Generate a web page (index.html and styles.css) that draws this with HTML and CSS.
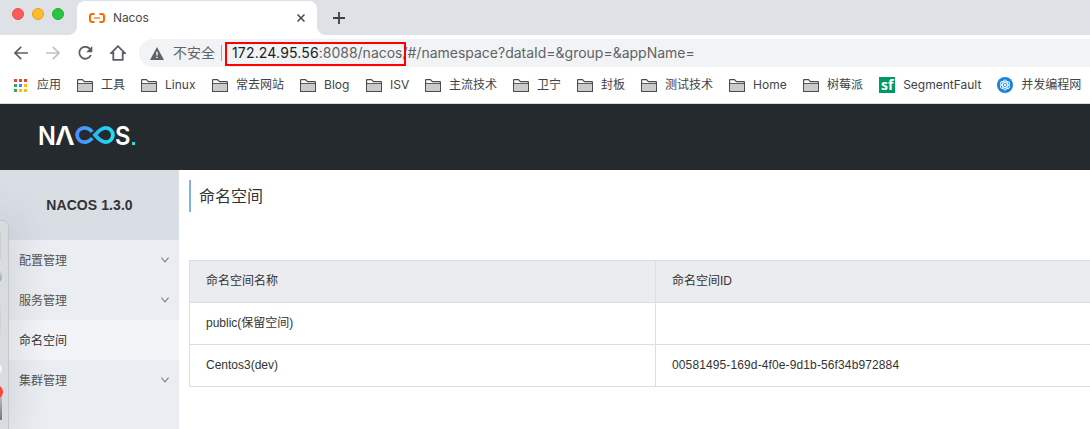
FILE: index.html
```html
<!DOCTYPE html>
<html lang="zh-CN">
<head>
<meta charset="utf-8">
<title>Nacos</title>
<link rel="stylesheet" href="styles.css">
</head>
<body>
<svg class="defs" width="0" height="0" aria-hidden="true">
  <symbol id="folder" viewBox="0 0 16 13"><path d="M.6 12.4V1.1Q.6.6 1.1.6H5.5L7.4 2.6H14.9Q15.4 2.6 15.4 3.1V12.4Z" fill="#fff" stroke="#4b4b4d" stroke-width="1.2"/><path d="M1.2 5.3H14.8V11.8H1.2Z" fill="#cbcbcb"/><path d="M1 4.6H15" stroke="#4b4b4d"/></symbol>
  <symbol id="chevron" viewBox="0 0 8 6"><path d="M.4.7 4 4.9 7.6.7" fill="none" stroke="#7d8288" stroke-width="1.1"/></symbol>
</svg>
<header class="tabs">
  <div class="lights"><i class="light red"></i><i class="light yellow"></i><i class="light green"></i></div>
  <div class="tab">
    <svg class="favicon" width="16" height="10" viewBox="0 0 16 10"><path d="M5.5 1H3.2Q1 1 1 3.2V6.8Q1 9 3.2 9H5.5M10.5 1H12.8Q15 1 15 3.2V6.8Q15 9 12.8 9H10.5" fill="none" stroke="#ff6a00" stroke-width="2"/><path d="M5 5H11" stroke="#ff7d20" stroke-width="1.4"/></svg>
    <span class="tab-name">Nacos</span>
    <svg width="8" height="8" viewBox="0 0 8 8"><path d="M.5.5 7.5 7.5M7.5.5.5 7.5" stroke="#45494d" stroke-width="1.5"/></svg>
  </div>
  <svg class="new-tab" width="12" height="12" viewBox="0 0 12 12"><path d="M6 0V12M0 6H12" stroke="#3c4043" stroke-width="1.8"/></svg>
</header>
<nav class="toolbar">
  <svg class="nav-icon" width="14" height="14" viewBox="0 0 14 14"><path d="M7.2.8 1 7 7.2 13.2M1 7H14" fill="none" stroke="#5b5f64" stroke-width="1.7"/></svg>
  <svg class="nav-icon" width="14" height="14" viewBox="0 0 14 14"><path d="M6.8.8 13 7 6.8 13.2M13 7H0" fill="none" stroke="#bfc1c4" stroke-width="1.7"/></svg>
  <svg class="nav-icon" width="15" height="14" viewBox="0 0 15 14"><path d="M12.4 3.5A6 6 0 1 0 12.9 9" fill="none" stroke="#5b5f64" stroke-width="1.8"/><path d="M14.3 0V6.2H8.1Z" fill="#5b5f64"/></svg>
  <svg class="nav-icon" width="16" height="16" viewBox="0 0 16 16"><path d="M8 1.2 1.2 8H3.3V14.9H12.7V8H14.8Z" fill="none" stroke="#5b5f64" stroke-width="1.8"/></svg>
  <div class="address">
    <svg width="14" height="13" viewBox="0 0 14 13"><path d="M7 0 14 13H0Z" fill="#5f6368"/><path d="M7 4.8V8.4M7 9.7V11.1" stroke="#fff" stroke-width="1.4"/></svg>
    <span class="insecure">不安全</span>
    <i class="divider"></i>
    <span class="url"><b>172.24.95.56</b>:8088/nacos/#/namespace?dataId=&amp;group=&amp;appName=</span>
    <i class="highlight"></i>
  </div>
</nav>
<nav class="bookmarks">
  <a class="mark"><span class="apps"><i class="r"></i><i class="r"></i><i class="r"></i><i class="g"></i><i class="b"></i><i class="y"></i><i class="g"></i><i class="y"></i><i class="y"></i></span><span>应用</span></a>
  <a class="mark"><svg><use href="#folder"/></svg><span>工具</span></a>
  <a class="mark"><svg><use href="#folder"/></svg><span class="w31">Linux</span></a>
  <a class="mark"><svg><use href="#folder"/></svg><span>常去网站</span></a>
  <a class="mark"><svg><use href="#folder"/></svg><span class="w26">Blog</span></a>
  <a class="mark"><svg><use href="#folder"/></svg><span class="w19">ISV</span></a>
  <a class="mark"><svg><use href="#folder"/></svg><span>主流技术</span></a>
  <a class="mark"><svg><use href="#folder"/></svg><span>卫宁</span></a>
  <a class="mark"><svg><use href="#folder"/></svg><span>封板</span></a>
  <a class="mark"><svg><use href="#folder"/></svg><span>测试技术</span></a>
  <a class="mark"><svg><use href="#folder"/></svg><span class="w34">Home</span></a>
  <a class="mark"><svg><use href="#folder"/></svg><span>树莓派</span></a>
  <a class="mark"><span class="sf">sf</span><span class="w78">SegmentFault</span></a>
  <a class="mark"><svg class="atom" viewBox="0 0 16 16"><circle cx="8" cy="8" r="8" fill="#1684df"/><g fill="none" stroke="#fff" stroke-width=".9"><ellipse cx="8" cy="8" rx="2.4" ry="5"/><ellipse cx="8" cy="8" rx="2.4" ry="5" transform="rotate(60 8 8)"/><ellipse cx="8" cy="8" rx="2.4" ry="5" transform="rotate(120 8 8)"/></g><circle cx="8" cy="8" r="1.2" fill="#fff"/></svg><span>并发编程网</span></a>
</nav>
<div class="banner">
  <div class="logo">
    <span class="logo-n">N</span><span class="logo-a">Λ</span>
    <svg class="infinity" width="40" height="18" viewBox="0 0 40 18"><defs><linearGradient id="blue"><stop stop-color="#4b8dff"/><stop offset="1" stop-color="#3da8fa"/></linearGradient><linearGradient id="cyan"><stop stop-color="#29b8f5"/><stop offset="1" stop-color="#1ee0ee"/></linearGradient></defs><path d="M17.2 5.9C14.8 3 12.5 1.9 9.2 1.9A7.1 7.1 0 0 0 9.2 16.1C12.5 16.1 14.8 15 17.2 12.1" fill="none" stroke="url(#blue)" stroke-width="3.8"/><path d="M20 9C23.7 4.7 26.5 1.9 30.8 1.9A7.1 7.1 0 0 1 30.8 16.1C26.5 16.1 23.7 13.3 20 9Z" fill="none" stroke="url(#cyan)" stroke-width="3.8"/></svg>
    <span class="logo-s">S</span><i class="dot"></i>
  </div>
</div>
<div class="page">
  <aside class="sidebar">
    <h1>NACOS 1.3.0</h1>
    <a class="item"><span>配置管理</span><svg><use href="#chevron"/></svg></a>
    <a class="item"><span>服务管理</span><svg><use href="#chevron"/></svg></a>
    <a class="item active"><span>命名空间</span></a>
    <a class="item"><span>集群管理</span><svg><use href="#chevron"/></svg></a>
  </aside>
  <main>
    <h2>命名空间</h2>
    <div class="table">
      <div class="row head"><div>命名空间名称</div><div>命名空间ID</div></div>
      <div class="row"><div>public(保留空间)</div><div></div></div>
      <div class="row"><div>Centos3(dev)</div><div class="uuid">00581495-169d-4f0e-9d1b-56f34b972884</div></div>
    </div>
  </main>
</div>
<div class="dock"><i class="app a1"></i><i class="app a2"></i><i class="app a3"></i><i class="app a4"></i><i class="app a5"></i><i class="badge"></i></div>
</body>
</html>
```
FILE: styles.css
```css
* { box-sizing: border-box; }
body { margin: 0; width: 1090px; height: 429px; overflow: hidden; position: relative; background: #fff; font-family: "Liberation Sans", "Noto Sans CJK SC", sans-serif; font-size: 12px; color: #333; }
svg { display: block; flex: none; }
.defs { position: absolute; }
i { display: block; }

.tabs { height: 35px; display: flex; background: #dee1e6; font-family: Inter, "Noto Sans CJK SC", sans-serif; }
.lights { display: flex; gap: 8px; padding: 8px 0 0 12px; width: 77px; }
.light { width: 12px; height: 12px; border-radius: 50%; }
.red { background: #fc5b57; border: 1px solid #e5504b; }
.yellow { background: #fdbc2e; border: 1px solid #e3a325; }
.green { background: #27c840; border: 1px solid #1fae32; }
.tab { position: relative; width: 240px; height: 34px; margin-top: 1px; padding: 0 12px; display: flex; align-items: center; border-radius: 8px 8px 0 0; background: #fff; }
.tab::before, .tab::after { content: ""; position: absolute; bottom: 0; width: 8px; height: 8px; }
.tab::before { left: -8px; background: radial-gradient(circle at 0 0, transparent 7.5px, #fff 8px); }
.tab::after { right: -8px; background: radial-gradient(circle at 100% 0, transparent 7.5px, #fff 8px); }
.tab-name { margin: -2px 0 0 8px; flex: 1; color: #45494d; font-size: 12px; letter-spacing: -.1px; }
.new-tab { margin: 12px 0 0 16px; }

.toolbar { height: 32px; display: flex; align-items: center; padding: 4px 0 0 14px; gap: 18px; }
.nav-icon:nth-child(4) { margin-left: -1px; }
.address { position: relative; flex: 1; height: 28px; margin-left: -5px; padding-left: 11px; display: flex; align-items: center; border-radius: 14px 0 0 14px; background: #f1f3f4; font-family: Inter, "Noto Sans CJK SC", sans-serif; font-size: 14px; color: #5f6368; }
.insecure { margin: -2px 0 0 9px; width: 42px; white-space: nowrap; }
.divider { width: 1px; height: 16px; margin: 0 10px 0 6px; background: #a6a9ac; }
.url { margin-top: -2px; white-space: nowrap; letter-spacing: -.01px; }
.url b { font-weight: 400; color: #202124; letter-spacing: .16px; }
.highlight { position: absolute; left: 86px; top: 3px; width: 181px; height: 24px; border: 2px solid #f00; }

.bookmarks { height: 37px; display: flex; align-items: center; gap: 16px; padding-left: 14px; border-bottom: 1px solid #dadce0; font-family: Inter, "Noto Sans CJK SC", sans-serif; font-size: 12px; color: #404347; }
.mark { display: flex; align-items: center; gap: 8px; height: 18px; white-space: nowrap; }
.mark > svg { width: 16px; height: 13px; }
.mark > .atom { height: 16px; }
.mark span { line-height: 18px; }
.apps { display: grid; grid-template-columns: repeat(3, 3px); gap: 2px; width: 15px; }
.apps i { width: 3px; height: 3px; }
.r { background: #ea4335; }
.g { background: #34a853; }
.b { background: #4285f4; }
.y { background: #fbbc05; }
.mark .w31 { width: 31px; }
.mark .w26 { width: 26px; }
.mark .w19 { width: 19px; }
.mark .w34 { width: 34px; }
.mark .w78 { width: 78px; }
.mark .sf { width: 16px; height: 16px; background: #009a61; color: #fff; font: bold 14px/15px "Open Sans", sans-serif; text-align: center; }

.banner { height: 66px; padding: 22px 0 0 39px; background: #252a2f; }
.logo { display: flex; align-items: flex-start; height: 18px; color: #fff; font: 600 25px/20px Inter, sans-serif; }
.logo span { display: block; height: 18px; transform-origin: 0 50%; }
.logo-n { width: 17px; transform: scaleX(.94); margin-left: -1.5px; }
.logo-a { width: 20px; transform: scaleX(1.08); }
.infinity { margin-left: .5px; }
.logo-s { width: 16px; transform: scaleX(.95); }
.dot { width: 3px; height: 3px; margin: 16px 0 0 1px; background: #1ee0ee; }

.page { display: flex; height: 259px; }
.sidebar { width: 179px; background: #eaedf2; }
h1 { margin: 0; height: 70px; background: #d9dde4; font-size: 14px; line-height: 71px; text-align: center; letter-spacing: .08px; color: #333; }
.item { height: 40px; padding: 0 10px 0 19px; display: flex; align-items: center; justify-content: space-between; color: #555; }
.item span { margin-top: -2px; }
.item svg { width: 8px; height: 6px; }
.active { background: #f2f3f7; color: #333; }
main { flex: 1; padding: 10px 0 0 10px; min-width: 0; }
h2 { margin: 0 0 48px; height: 32px; padding-left: 8px; border-left: 2px solid #80b4df; font-size: 16px; font-weight: 400; line-height: 34px; color: #333; }
.table { border: 1px solid #dcdee3; border-width: 1px 0 0 1px; }
.row { display: grid; grid-template-columns: 466px 1fr; height: 42px; border-bottom: 1px solid #dcdee3; }
.row div { padding-left: 16px; line-height: 40px; white-space: nowrap; }
.row div:first-child { border-right: 1px solid #dcdee3; }
.row .uuid { letter-spacing: .12px; }
.head { background: #ebecf0; }

.dock { position: absolute; left: -12px; top: 220px; width: 21px; height: 220px; border: 1px solid #c3c7cb; border-radius: 7px; background: #d8dcdf; box-shadow: 0 0 38px rgba(70, 80, 85, .25); }
.app, .badge { position: absolute; left: 5px; width: 7px; }
.a1 { top: 11px; height: 27px; background: #c9ced2; }
.a2 { top: 45px; height: 17px; border-radius: 0 6px 6px 0; width: 8px; background: linear-gradient(#f2fafa, #859397); }
.a3 { top: 85px; height: 28px; background: #cfd3d6; }
.a4 { top: 142px; height: 12px; border-radius: 0 6px 6px 0; width: 8px; background: #f6f6f3; }
.a5 { top: 169px; height: 30px; width: 8px; background: linear-gradient(#cbd0d3, #72787b); }
.badge { top: 165px; width: 9px; height: 12px; border-radius: 50%; background: #ff453d; }
```
